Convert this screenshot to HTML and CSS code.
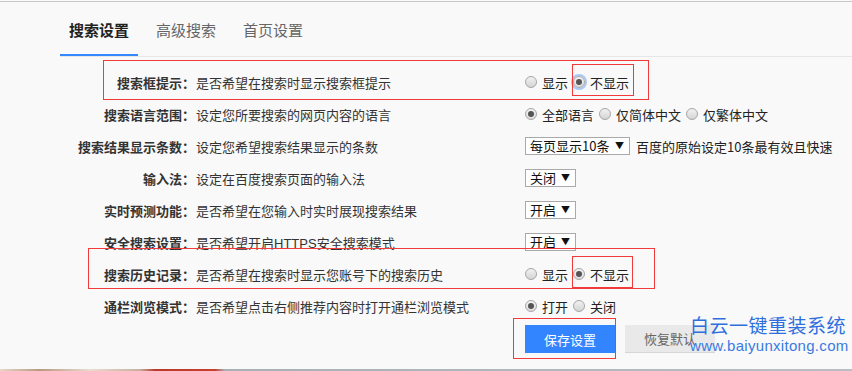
FILE: index.html
```html
<!DOCTYPE html>
<html lang="zh-CN">
<head>
<meta charset="utf-8">
<title>搜索设置</title>
<link rel="stylesheet" href="styles.css">
</head>
<body>
<div class="topline"></div>
<nav class="tabs">
  <span class="tab active">搜索设置</span>
  <span class="tab">高级搜索</span>
  <span class="tab">首页设置</span>
</nav>
<div class="form">
  <div class="row">
    <span class="label">搜索框提示：</span>
    <span class="desc">是否希望在搜索时显示搜索框提示</span>
    <span class="ctrl">
      <span class="opt"><span class="radio"></span>显示</span>
      <span class="opt"><span class="radio checked focus"></span>不显示</span>
    </span>
  </div>
  <div class="row">
    <span class="label">搜索语言范围：</span>
    <span class="desc">设定您所要搜索的网页内容的语言</span>
    <span class="ctrl">
      <span class="opt"><span class="radio checked"></span>全部语言</span>
      <span class="opt"><span class="radio"></span>仅简体中文</span>
      <span class="opt"><span class="radio"></span>仅繁体中文</span>
    </span>
  </div>
  <div class="row">
    <span class="label">搜索结果显示条数：</span>
    <span class="desc">设定您希望搜索结果显示的条数</span>
    <span class="ctrl">
      <span class="select wide">每页显示10条<span class="arrow">▼</span></span>
      <span class="note">百度的原始设定10条最有效且快速</span>
    </span>
  </div>
  <div class="row">
    <span class="label">输入法：</span>
    <span class="desc">设定在百度搜索页面的输入法</span>
    <span class="ctrl"><span class="select">关闭<span class="arrow">▼</span></span></span>
  </div>
  <div class="row">
    <span class="label">实时预测功能：</span>
    <span class="desc">是否希望在您输入时实时展现搜索结果</span>
    <span class="ctrl"><span class="select">开启<span class="arrow">▼</span></span></span>
  </div>
  <div class="row">
    <span class="label">安全搜索设置：</span>
    <span class="desc">是否希望开启<span class="latin">HTTPS</span>安全搜索模式</span>
    <span class="ctrl"><span class="select">开启<span class="arrow">▼</span></span></span>
  </div>
  <div class="row">
    <span class="label">搜索历史记录：</span>
    <span class="desc">是否希望在搜索时显示您账号下的搜索历史</span>
    <span class="ctrl">
      <span class="opt"><span class="radio"></span>显示</span>
      <span class="opt"><span class="radio checked"></span>不显示</span>
    </span>
  </div>
  <div class="row">
    <span class="label">通栏浏览模式：</span>
    <span class="desc">是否希望点击右侧推荐内容时打开通栏浏览模式</span>
    <span class="ctrl">
      <span class="opt"><span class="radio checked"></span>打开</span>
      <span class="opt"><span class="radio"></span>关闭</span>
    </span>
  </div>
  <div class="buttons">
    <span class="btn save">保存设置</span>
    <span class="btn reset">恢复默认</span>
  </div>
</div>

<div class="mark mark-1"></div>
<div class="mark mark-1s"></div>
<div class="mark mark-2"></div>
<div class="mark mark-2s"></div>
<div class="mark mark-3"></div>

<div class="watermark">
  <div class="wm-title">白云一键重装系统</div>
  <div class="wm-url">www.baiyunxitong.com</div>
</div>

<div class="photostrip"></div>
</body>
</html>
```
FILE: styles.css
```css
html, body {
  margin: 0;
  padding: 0;
}
body {
  width: 852px;
  height: 371px;
  overflow: hidden;
  position: relative;
  background: #f9f9f9;
  font-family: "Noto Sans CJK SC", "Noto Sans", sans-serif;
  font-size: 13px;
  color: #333;
}
.topline {
  height: 1px;
  margin-top: 1px;
  background: #c8c8c8;
}
.tabs {
  display: flex;
  gap: 9px;
  margin-left: 60px;
  border-bottom: 1px solid #e6e6e6;
}
.tab {
  height: 50px;
  padding: 2px 9px 0;
  display: flex;
  align-items: center;
  font-size: 15px;
  color: #666;
  border-bottom: 2px solid transparent;
}
.tab.active {
  color: #222;
  font-weight: bold;
  border-bottom-color: #3388ff;
}
.form {
  margin-top: 9px;
}
.row {
  display: grid;
  grid-template-columns: 195px 330px auto;
  height: 32px;
  align-items: center;
  white-space: nowrap;
}
.label {
  text-align: right;
  font-weight: bold;
  color: #333;
}
.desc {
  padding-left: 1px;
  color: #333;
}
.latin {
  font-family: "Liberation Sans", Arial, sans-serif;
}
.ctrl {
  display: flex;
  align-items: center;
  gap: 5px;
}
.opt {
  display: inline-flex;
  align-items: center;
  gap: 5px;
  color: #222;
}
.radio {
  width: 10px;
  height: 10px;
  border-radius: 50%;
  border: 1px solid #a6a6a6;
  background: linear-gradient(#f2f2f2, #d4d4d4);
  position: relative;
  flex: none;
}
.radio.checked {
  background: linear-gradient(#f4f4f4, #dcdcdc);
}
.radio.checked::after {
  content: "";
  position: absolute;
  left: 2px;
  top: 2px;
  width: 6px;
  height: 6px;
  border-radius: 50%;
  background: #555;
}
.radio.focus {
  box-shadow: 0 0 0 2px #a9c7f7;
}
.select {
  display: inline-flex;
  align-items: center;
  justify-content: space-between;
  height: 16px;
  width: 40px;
  padding: 0 5px 0 4px;
  border: 1px solid #a9a9a9;
  background: #fff;
  color: #111;
  font-size: 13px;
  line-height: 16px;
}
.select.wide {
  width: 94px;
}
.arrow {
  font-size: 9px;
  color: #111;
}
.note {
  margin-left: 1px;
  color: #222;
}
.buttons {
  display: flex;
  gap: 10px;
  margin-top: 3px;
  padding-left: 525px;
}
.btn {
  width: 90px;
  height: 28px;
  display: flex;
  align-items: center;
  justify-content: center;
  font-size: 13px;
}
.btn.save {
  background: #3385ff;
  color: #fff;
}
.btn.reset {
  background: #e9e9e9;
  color: #666;
  box-sizing: border-box;
  border-bottom: 1px solid #d6d6d6;
}
.mark {
  position: absolute;
  border: 1px solid #f23a3a;
  box-sizing: border-box;
}
.mark-1 { left: 103px; top: 60px; width: 546px; height: 40px; }
.mark-1s { left: 572px; top: 64px; width: 62px; height: 32px; }
.mark-2 { left: 88px; top: 248px; width: 567px; height: 41px; }
.mark-2s { left: 572px; top: 256px; width: 61px; height: 32px; }
.mark-3 { left: 513px; top: 318px; width: 103px; height: 41px; }
.watermark {
  position: absolute;
  left: 690px;
  top: 312px;
  color: #2f6fdd;
  white-space: nowrap;
}
.wm-title {
  font-size: 19px;
  line-height: 26px;
  letter-spacing: 0.5px;
}
.wm-url {
  font-family: "Liberation Sans", Arial, sans-serif;
  font-size: 15px;
  line-height: 16px;
  letter-spacing: 0.3px;
  color: #3a7be3;
}
.photostrip {
  position: absolute;
  left: 0;
  bottom: 0;
  width: 852px;
  height: 2px;
  background: linear-gradient(90deg, #e6d8c8 0, #b89a80 40px, #e8dcd0 90px, #c8b0a0 140px, #b83a2a 155px, #c84030 215px, #a8b0b8 225px, #b8bec4 852px);
}
```
